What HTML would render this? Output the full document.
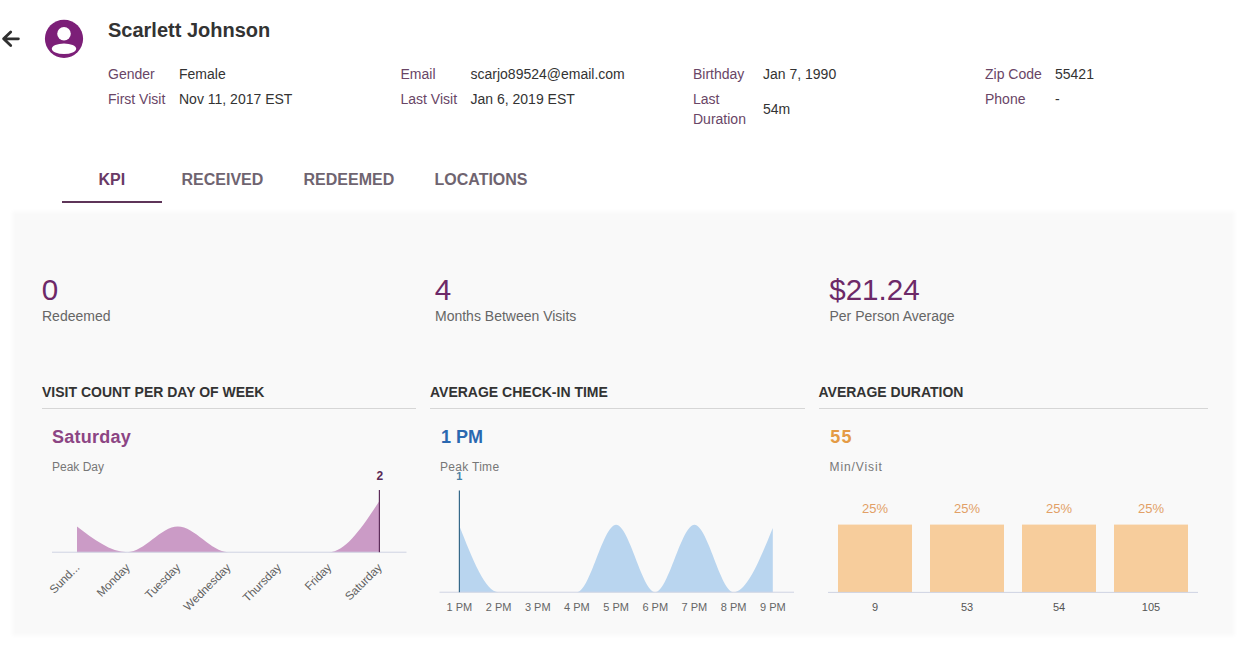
<!DOCTYPE html>
<html><head><meta charset="utf-8"><style>
html,body{margin:0;padding:0;background:#fff;width:1253px;height:651px;overflow:hidden;}
body{position:relative;font-family:"Liberation Sans",sans-serif;}
.t{position:absolute;white-space:nowrap;}
</style></head><body>
<svg style="position:absolute;left:0;top:0" width="100" height="70">
<path d="M18.4,38.8 H4.5 M10.7,32 L3.6,38.8 L10.7,45.6" fill="none" stroke="#303030" stroke-width="2.8" stroke-linecap="round" stroke-linejoin="round"/>
<circle cx="64" cy="38.8" r="19.1" fill="#7c1f78"/>
<circle cx="64" cy="33.8" r="6.8" fill="#fff"/>
<ellipse cx="64" cy="48.8" rx="12.2" ry="5.2" fill="#fff"/>
</svg>
<div class="t" style="left:108.00px;top:20.37px;font-size:20px;line-height:20px;color:#333;font-weight:bold;">Scarlett Johnson</div>
<div class="t" style="left:108.00px;top:66.95px;font-size:14px;line-height:14px;color:#694566;font-weight:normal;">Gender</div>
<div class="t" style="left:179.00px;top:66.95px;font-size:14px;line-height:14px;color:#333333;font-weight:normal;">Female</div>
<div class="t" style="left:108.00px;top:91.75px;font-size:14px;line-height:14px;color:#694566;font-weight:normal;">First Visit</div>
<div class="t" style="left:179.00px;top:91.75px;font-size:14px;line-height:14px;color:#333333;font-weight:normal;">Nov 11, 2017 EST</div>
<div class="t" style="left:400.50px;top:66.95px;font-size:14px;line-height:14px;color:#694566;font-weight:normal;">Email</div>
<div class="t" style="left:470.50px;top:66.95px;font-size:14px;line-height:14px;color:#333333;font-weight:normal;">scarjo89524@email.com</div>
<div class="t" style="left:400.50px;top:91.75px;font-size:14px;line-height:14px;color:#694566;font-weight:normal;">Last Visit</div>
<div class="t" style="left:470.50px;top:91.75px;font-size:14px;line-height:14px;color:#333333;font-weight:normal;">Jan 6, 2019 EST</div>
<div class="t" style="left:693.00px;top:66.95px;font-size:14px;line-height:14px;color:#694566;font-weight:normal;">Birthday</div>
<div class="t" style="left:763.00px;top:66.95px;font-size:14px;line-height:14px;color:#333333;font-weight:normal;">Jan 7, 1990</div>
<div class="t" style="left:985.00px;top:66.95px;font-size:14px;line-height:14px;color:#694566;font-weight:normal;">Zip Code</div>
<div class="t" style="left:1055.00px;top:66.95px;font-size:14px;line-height:14px;color:#333333;font-weight:normal;">55421</div>
<div class="t" style="left:985.00px;top:91.75px;font-size:14px;line-height:14px;color:#694566;font-weight:normal;">Phone</div>
<div class="t" style="left:1055.00px;top:91.75px;font-size:14px;line-height:14px;color:#333333;font-weight:normal;">-</div>
<div class="t" style="left:693.00px;top:91.75px;font-size:14px;line-height:14px;color:#694566;font-weight:normal;">Last</div>
<div class="t" style="left:693.00px;top:111.75px;font-size:14px;line-height:14px;color:#694566;font-weight:normal;">Duration</div>
<div class="t" style="left:763.00px;top:101.75px;font-size:14px;line-height:14px;color:#333333;font-weight:normal;">54m</div>
<div class="t" style="left:98.50px;top:171.96px;font-size:16px;line-height:16px;color:#6a3a66;font-weight:bold;">KPI</div>
<div class="t" style="left:181.50px;top:171.96px;font-size:16px;line-height:16px;color:#6f6470;font-weight:bold;">RECEIVED</div>
<div class="t" style="left:303.50px;top:171.96px;font-size:16px;line-height:16px;color:#6f6470;font-weight:bold;">REDEEMED</div>
<div class="t" style="left:434.50px;top:171.96px;font-size:16px;line-height:16px;color:#6f6470;font-weight:bold;">LOCATIONS</div>
<div style="position:absolute;left:62px;top:201px;width:100px;height:2px;background:#5e3559"></div>
<div style="position:absolute;left:15px;top:214px;width:1217px;height:419px;background:#f9f9f9;box-shadow:0 0 4px 3px #fafafa"></div>
<div class="t" style="left:41.70px;top:275.14px;font-size:29.6px;line-height:29.6px;color:#6d2968;font-weight:normal;">0</div>
<div class="t" style="left:42.00px;top:309.15px;font-size:14px;line-height:14px;color:#666;font-weight:normal;">Redeemed</div>
<div class="t" style="left:434.70px;top:275.14px;font-size:29.6px;line-height:29.6px;color:#6d2968;font-weight:normal;">4</div>
<div class="t" style="left:435.00px;top:309.15px;font-size:14px;line-height:14px;color:#666;font-weight:normal;">Months Between Visits</div>
<div class="t" style="left:829.20px;top:275.14px;font-size:29.6px;line-height:29.6px;color:#6d2968;font-weight:normal;">$21.24</div>
<div class="t" style="left:829.50px;top:309.15px;font-size:14px;line-height:14px;color:#666;font-weight:normal;">Per Person Average</div>
<div class="t" style="left:42.00px;top:384.75px;font-size:14px;line-height:14px;color:#333;font-weight:bold;">VISIT COUNT PER DAY OF WEEK</div>
<div style="position:absolute;left:42px;top:408px;width:374px;height:1px;background:#d6d6d6"></div>
<div class="t" style="left:430.00px;top:384.75px;font-size:14px;line-height:14px;color:#333;font-weight:bold;">AVERAGE CHECK-IN TIME</div>
<div style="position:absolute;left:430px;top:408px;width:375px;height:1px;background:#d6d6d6"></div>
<div class="t" style="left:818.50px;top:384.75px;font-size:14px;line-height:14px;color:#333;font-weight:bold;">AVERAGE DURATION</div>
<div style="position:absolute;left:818.5px;top:408px;width:389px;height:1px;background:#d6d6d6"></div>
<div class="t" style="left:52.00px;top:427.96px;font-size:18px;line-height:18px;color:#8c4584;font-weight:bold;letter-spacing:0.25px;">Saturday</div>
<div class="t" style="left:52.00px;top:460.64px;font-size:12px;line-height:12px;color:#777;font-weight:normal;">Peak Day</div>
<div class="t" style="left:441.00px;top:427.96px;font-size:18px;line-height:18px;color:#2a68b0;font-weight:bold;">1 PM</div>
<div class="t" style="left:440.00px;top:460.64px;font-size:12px;line-height:12px;color:#777;font-weight:normal;letter-spacing:0.3px;">Peak Time</div>
<div class="t" style="left:830.20px;top:427.96px;font-size:18px;line-height:18px;color:#e49b45;font-weight:bold;letter-spacing:1.2px;">55</div>
<div class="t" style="left:829.50px;top:460.64px;font-size:12px;line-height:12px;color:#777;font-weight:normal;letter-spacing:0.9px;">Min/Visit</div>
<svg style="position:absolute;left:0;top:0" width="1253" height="651">
<path d="M77.00,526.60 C93.80,539.40 110.60,552.20 127.40,552.20 C144.20,552.20 161.00,526.60 177.80,526.60 C194.60,526.60 211.40,552.20 228.20,552.20 C245.00,552.20 261.80,552.20 278.60,552.20 C295.40,552.20 312.20,552.20 329.00,552.20 C345.80,552.20 362.60,526.60 379.40,501.00 L379.40,552.2 L77.00,552.2 Z" fill="#cb9bc6"/>
<rect x="52" y="551.7" width="354.5" height="1" fill="#cfd3e3"/>
<rect x="378.80" y="490" width="1.2" height="62.200000000000045" fill="#5e2d5b"/>
<text x="379.90" y="479.5" font-family="Liberation Sans" font-size="12" font-weight="bold" fill="#5a2a57" text-anchor="middle">2</text>
<text x="80.20" y="568.3" font-family="Liberation Sans" font-size="11.6" fill="#606060" text-anchor="end" transform="rotate(-45 80.20 568.3)">Sund...</text>
<text x="130.60" y="568.3" font-family="Liberation Sans" font-size="11.6" fill="#606060" text-anchor="end" transform="rotate(-45 130.60 568.3)">Monday</text>
<text x="181.00" y="568.3" font-family="Liberation Sans" font-size="11.6" fill="#606060" text-anchor="end" transform="rotate(-45 181.00 568.3)">Tuesday</text>
<text x="231.40" y="568.3" font-family="Liberation Sans" font-size="11.6" fill="#606060" text-anchor="end" transform="rotate(-45 231.40 568.3)">Wednesday</text>
<text x="281.80" y="568.3" font-family="Liberation Sans" font-size="11.6" fill="#606060" text-anchor="end" transform="rotate(-45 281.80 568.3)">Thursday</text>
<text x="332.20" y="568.3" font-family="Liberation Sans" font-size="11.6" fill="#606060" text-anchor="end" transform="rotate(-45 332.20 568.3)">Friday</text>
<text x="382.60" y="568.3" font-family="Liberation Sans" font-size="11.6" fill="#606060" text-anchor="end" transform="rotate(-45 382.60 568.3)">Saturday</text>
<path d="M459.40,526.05 C472.46,559.12 485.52,592.20 498.57,592.20 C511.63,592.20 524.69,592.20 537.75,592.20 C550.81,592.20 563.87,592.20 576.92,592.20 C589.98,592.20 603.04,524.70 616.10,524.70 C629.16,524.70 642.22,592.20 655.27,592.20 C668.33,592.20 681.39,524.70 694.45,524.70 C707.51,524.70 720.57,592.20 733.62,592.20 C746.68,592.20 759.74,560.14 772.80,528.08 L772.80,592.2 L459.40,592.2 Z" fill="#b9d5ef"/>
<rect x="439.5" y="591.7" width="354.5" height="1" fill="#cfd3e3"/>
<rect x="458.80" y="490.5" width="1.2" height="101.70000000000005" fill="#36698a"/>
<text x="459.40" y="479.5" font-family="Liberation Sans" font-size="11" font-weight="bold" fill="#4a82a6" text-anchor="middle">1</text>
<text x="459.40" y="610.5" font-family="Liberation Sans" font-size="11" fill="#666" text-anchor="middle">1 PM</text>
<text x="498.57" y="610.5" font-family="Liberation Sans" font-size="11" fill="#666" text-anchor="middle">2 PM</text>
<text x="537.75" y="610.5" font-family="Liberation Sans" font-size="11" fill="#666" text-anchor="middle">3 PM</text>
<text x="576.92" y="610.5" font-family="Liberation Sans" font-size="11" fill="#666" text-anchor="middle">4 PM</text>
<text x="616.10" y="610.5" font-family="Liberation Sans" font-size="11" fill="#666" text-anchor="middle">5 PM</text>
<text x="655.27" y="610.5" font-family="Liberation Sans" font-size="11" fill="#666" text-anchor="middle">6 PM</text>
<text x="694.45" y="610.5" font-family="Liberation Sans" font-size="11" fill="#666" text-anchor="middle">7 PM</text>
<text x="733.62" y="610.5" font-family="Liberation Sans" font-size="11" fill="#666" text-anchor="middle">8 PM</text>
<text x="772.80" y="610.5" font-family="Liberation Sans" font-size="11" fill="#666" text-anchor="middle">9 PM</text>
<rect x="838" y="524.6" width="74" height="67.79999999999995" fill="#f7cd9c"/>
<text x="875" y="513" font-family="Liberation Sans" font-size="13" fill="#e2a066" text-anchor="middle">25%</text>
<text x="875" y="610.5" font-family="Liberation Sans" font-size="11" fill="#555" text-anchor="middle">9</text>
<rect x="930" y="524.6" width="74" height="67.79999999999995" fill="#f7cd9c"/>
<text x="967" y="513" font-family="Liberation Sans" font-size="13" fill="#e2a066" text-anchor="middle">25%</text>
<text x="967" y="610.5" font-family="Liberation Sans" font-size="11" fill="#555" text-anchor="middle">53</text>
<rect x="1022" y="524.6" width="74" height="67.79999999999995" fill="#f7cd9c"/>
<text x="1059" y="513" font-family="Liberation Sans" font-size="13" fill="#e2a066" text-anchor="middle">25%</text>
<text x="1059" y="610.5" font-family="Liberation Sans" font-size="11" fill="#555" text-anchor="middle">54</text>
<rect x="1114" y="524.6" width="74" height="67.79999999999995" fill="#f7cd9c"/>
<text x="1151" y="513" font-family="Liberation Sans" font-size="13" fill="#e2a066" text-anchor="middle">25%</text>
<text x="1151" y="610.5" font-family="Liberation Sans" font-size="11" fill="#555" text-anchor="middle">105</text>
<rect x="828" y="591.9" width="370" height="1" fill="#cfd3e3"/>
</svg>
</body></html>
